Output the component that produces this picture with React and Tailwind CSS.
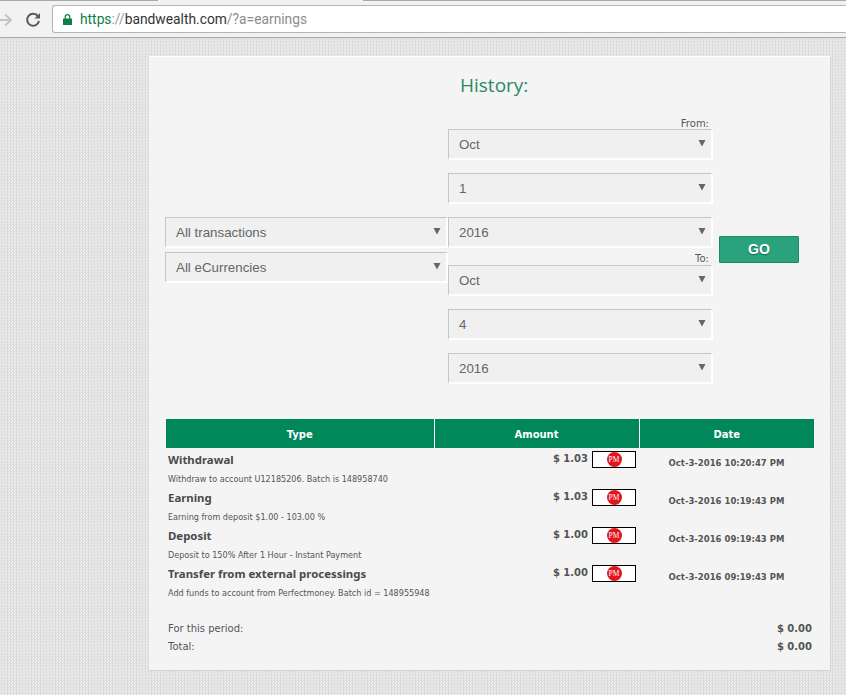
import React from 'react';

const rows = [
    { type: 'Withdrawal', note: 'Withdraw to account U12185206. Batch is 148958740', amount: '$ 1.03', date: 'Oct-3-2016 10:20:47 PM' },
    { type: 'Earning', note: 'Earning from deposit $1.00 - 103.00 %', amount: '$ 1.03', date: 'Oct-3-2016 10:19:43 PM' },
    { type: 'Deposit', note: 'Deposit to 150% After 1 Hour - Instant Payment', amount: '$ 1.00', date: 'Oct-3-2016 09:19:43 PM' },
    { type: 'Transfer from external processings', note: 'Add funds to account from Perfectmoney. Batch id = 148955948', amount: '$ 1.00', date: 'Oct-3-2016 09:19:43 PM' },
];

const SelectBox = ({ value, className = '' }) => (
    <div className={`flex h-[31px] items-center justify-between border-t border-l border-r-2 border-b-2 border-t-[#c6c6c6] border-l-[#c6c6c6] border-r-white border-b-white bg-[#f0f0f0] pl-[10px] pr-[5px] font-['Liberation_Sans',sans-serif] text-[13.33px] text-[#666] ${className}`}>
        <span className="pt-[2px]">{value}</span>
        <svg width="8" height="8" viewBox="0 0 8 8" className="mb-[2px]">
            <path d="M0.5 1h7L4 7.5z" fill="#666" />
        </svg>
    </div>
);

const PmBadge = () => (
    <div className="flex h-[17px] w-[44px] items-center justify-center border border-black bg-white">
        <div className="flex h-[15px] w-[15px] items-center justify-center rounded-full bg-[#e3141b] font-['Liberation_Serif',serif] text-[7.5px] leading-none text-white">
            PM
        </div>
    </div>
);

const BrowserBar = () => (
    <div className="h-[38px] border-b border-[#a9a9a9] bg-[#f2f2f2]">
        <div className="flex h-px">
            <div className="w-[158px] bg-[#a8a8a8]" />
            <div className="w-[205px]" />
            <div className="flex-1 bg-[#a8a8a8]" />
        </div>
        <div className="flex h-[36px] items-center">
            <svg width="12" height="14" viewBox="0 0 12 14" className="mt-[2px]" fill="none" stroke="#c4c4c4" strokeWidth="2">
                <path d="M0 7h11M5 1.5 11 7l-6 5.5" />
            </svg>
            <svg width="16" height="16" viewBox="0 0 16 16" className="ml-[13px] mt-[2px]" fill="none">
                <path d="M13 4.2A6 6 0 1 0 14 9" stroke="#5a5a5a" strokeWidth="2" />
                <path d="M9.5 6.5H15V1z" fill="#5a5a5a" />
            </svg>
            <div className="ml-[11px] flex h-[28px] flex-1 items-center rounded-l-[3px] border border-r-0 border-[#b5b5b5] bg-white pl-[10px] font-['Roboto',sans-serif] text-[13.8px]">
                <svg width="9" height="11" viewBox="0 0 9 11">
                    <path d="M2.2 5V3a2.3 2.3 0 0 1 4.6 0v2" fill="none" stroke="#0b8043" strokeWidth="1.2" />
                    <rect x="0" y="4.5" width="9" height="6.5" rx="0.5" fill="#0b8043" />
                </svg>
                <span className="ml-[8px] text-[#0b8043]">https</span>
                <span className="text-[#9a9a9a]">://</span>
                <span className="text-[#333]">bandwealth.com</span>
                <span className="text-[#8c8c8c]">/?a=earnings</span>
            </div>
        </div>
    </div>
);

const App = () => {
    return (
        <div className="h-[695px] w-[846px] overflow-hidden bg-[#e2e2e2] bg-[repeating-conic-gradient(#dcdcdc_0_25%,#ececec_0_50%)] bg-[length:3px_3px]">
            <BrowserBar />

            <div className="ml-[149px] mt-[18px] h-[615px] w-[682px] border-t border-r border-b border-t-white border-r-[#d4d4d4] border-b-[#d4d4d4] bg-[#f4f4f4] pl-[16px] font-['DejaVu_Sans',sans-serif]">
                <h2 className="ml-[295px] pt-[14px] font-['Open_Sans',sans-serif] text-[19px] leading-[28px] text-[#2b8a63]">History:</h2>

                <div className="mt-[18px] flex items-center">
                    <div className="mb-[2px] flex w-[283px] flex-col gap-[4px]">
                        <SelectBox value="All transactions" />
                        <SelectBox value="All eCurrencies" />
                    </div>
                    <div className="w-[265px]">
                        <div className="pr-[4px] pt-[2px] text-right text-[10px] leading-[10px] text-[#555]">From:</div>
                        <SelectBox value="Oct" className="mb-[13px]" />
                        <SelectBox value="1" className="mb-[13px]" />
                        <SelectBox value="2016" />
                        <div className="mt-[5px] pr-[4px] text-right text-[10px] leading-[12px] text-[#555]">To:</div>
                        <SelectBox value="Oct" className="mb-[13px]" />
                        <SelectBox value="4" className="mb-[13px]" />
                        <SelectBox value="2016" />
                    </div>
                    <button className="mb-[2px] ml-[6px] h-[27px] w-[80px] rounded-[1px] border border-[#1c8a66] bg-[#2aa27c] font-['Liberation_Sans',sans-serif] text-[14px] font-bold text-white [text-shadow:0_1px_1px_#14684d]">GO</button>
                </div>

                <table className="ml-px mt-[35px] w-[648px] table-fixed border-collapse">
                    <thead>
                        <tr className="h-[29px] bg-[#00875a] text-[10px] font-bold text-white">
                            <th className="w-[268px] border-r border-white pt-px font-bold">Type</th>
                            <th className="w-[205px] border-r border-white pt-px font-bold">Amount</th>
                            <th className="pt-px font-bold">Date</th>
                        </tr>
                    </thead>
                    <tbody>
                        {rows.map((row) => (
                            <tr key={row.note} className="h-[38px] align-top">
                                <td className="pl-[2px] pt-[5px]">
                                    <div className="font-['Noto_Sans',sans-serif] text-[11.4px] leading-[14px] font-bold whitespace-nowrap text-[#4a4a4a]">{row.type}</div>
                                    <div className="mt-[6px] font-['DejaVu_Sans_Condensed','DejaVu_Sans',sans-serif] text-[9px] leading-[12px] whitespace-nowrap text-[#555]">{row.note}</div>
                                </td>
                                <td className="pt-[3px]">
                                    <div className="flex items-start justify-end gap-[4px] pr-[3px]">
                                        <span className="pt-px text-[10px] leading-[14px] font-bold text-[#555]">{row.amount}</span>
                                        <PmBadge />
                                    </div>
                                </td>
                                <td className="pt-[9px] text-center text-[8.5px] leading-[12px] font-bold whitespace-nowrap text-[#555]">{row.date}</td>
                            </tr>
                        ))}
                    </tbody>
                </table>

                <div className="ml-[3px] mt-[20px] w-[644px] text-[10px] leading-[18px] text-[#555]">
                    <div className="flex justify-between">
                        <span>For this period:</span>
                        <span className="font-bold">$ 0.00</span>
                    </div>
                    <div className="flex justify-between">
                        <span>Total:</span>
                        <span className="font-bold">$ 0.00</span>
                    </div>
                </div>
            </div>
        </div>
    );
};

export default App;
